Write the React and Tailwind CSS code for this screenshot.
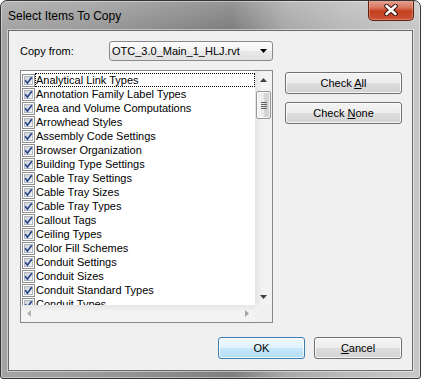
import clsx from "clsx";

const ITEMS = [
  "Analytical Link Types",
  "Annotation Family Label Types",
  "Area and Volume Computations",
  "Arrowhead Styles",
  "Assembly Code Settings",
  "Browser Organization",
  "Building Type Settings",
  "Cable Tray Settings",
  "Cable Tray Sizes",
  "Cable Tray Types",
  "Callout Tags",
  "Ceiling Types",
  "Color Fill Schemes",
  "Conduit Settings",
  "Conduit Sizes",
  "Conduit Standard Types",
  "Conduit Types",
];

function Check() {
  return (
    <svg width="13" height="13" viewBox="0 0 13 13" className="shrink-0">
      <defs>
        <linearGradient id="cbx" x1="0" y1="0" x2="1" y2="1">
          <stop offset="0" stopColor="#c9cdd4" />
          <stop offset="1" stopColor="#f6f6f6" />
        </linearGradient>
      </defs>
      <rect x="0.5" y="0.5" width="12" height="12" fill="#fff" stroke="#8e8f8f" />
      <rect x="2.5" y="2.5" width="8" height="8" fill="url(#cbx)" stroke="#b3b8c0" />
      <path d="M3.2 6.3 L5.4 9.2 L9.8 3.2" fill="none" stroke="#28468c" strokeWidth="1.7" />
    </svg>
  );
}

function Arrow({ dir, color = "#3f3f3f" }) {
  const d = {
    up: "M3.5 0 L7 4 L0 4 Z",
    down: "M0 0 L7 0 L3.5 4 Z",
    left: "M4 0 L4 7 L0 3.5 Z",
    right: "M0 0 L4 3.5 L0 7 Z",
  }[dir];
  const vert = dir === "up" || dir === "down";
  return (
    <svg width={vert ? 7 : 4} height={vert ? 4 : 7}>
      <path d={d} fill={color} />
    </svg>
  );
}

function WinButton({ children, def, className }) {
  return (
    <button
      type="button"
      className={clsx(
        "h-[22px] rounded-[3px] border flex items-center justify-center text-[11px] text-black",
        def
          ? "border-[#3c7fb1] bg-[linear-gradient(180deg,#eef8fd_0%,#dff2fc_50%,#c6e8fb_51%,#b3def6_100%)] shadow-[inset_0_0_0_1px_rgba(255,255,255,0.75)]"
          : "border-[#707070] bg-[linear-gradient(180deg,#f4f4f4_0%,#ececec_50%,#dedede_51%,#d2d2d2_100%)] shadow-[inset_0_0_0_1px_rgba(255,255,255,0.8)]",
        className
      )}
    >
      <span className="whitespace-pre">{children}</span>
    </button>
  );
}

function CloseButton() {
  return (
    <div className="absolute left-[367px] top-[-1px] w-[46px] h-[21px] rounded-b-[5px] border border-[#5e2215] border-t-0 bg-[linear-gradient(180deg,#e7a899_0%,#d9725a_40%,#c2401f_55%,#cd5234_100%)] shadow-[inset_0_0_0_1px_rgba(255,200,180,0.35)] flex items-center justify-center">
      <svg width="14" height="12" viewBox="0 0 14 12">
        <path d="M2.5 2 L11.5 10 M11.5 2 L2.5 10" stroke="#3b130b" strokeWidth="4.6" strokeLinecap="round" />
        <path d="M2.5 2 L11.5 10 M11.5 2 L2.5 10" stroke="#ffffff" strokeWidth="2.6" strokeLinecap="round" />
      </svg>
    </div>
  );
}

export default function App() {
  return (
    <div
      className="w-[421px] h-[379px] relative flex flex-col overflow-hidden rounded-t-[7px] rounded-b-[3px] border border-[#353535] bg-[linear-gradient(180deg,rgba(255,255,255,0.18)_0px,rgba(255,255,255,0)_28px),linear-gradient(90deg,#a4a4a4_0%,#9c9c9c_20%,#8d8d8d_38%,#7f7f7f_55%,#a9a9a9_68%,#bababa_82%,#c8c8c8_100%)] shadow-[inset_0_0_0_1px_rgba(255,255,255,0.4)]"
      style={{ fontFamily: '"Liberation Sans", Arial, sans-serif' }}
    >
      {/* title bar */}
      <div className="h-[29px] shrink-0 flex items-start pl-[7px] pt-[7px]">
        <span className="text-[12px] leading-[16px] text-black">Select Items To Copy</span>
      </div>
      <CloseButton />

      {/* client area */}
      <div className="flex-1 mx-[7px] mb-[7px] border border-[#6b6b6b] bg-[#f0f0f0] shadow-[0_0_0_1px_rgba(255,255,255,0.45)] flex flex-col pl-[11px] pt-[10px] text-[11px] text-black">
        <div className="flex items-center h-[20px]">
          <span className="w-[89px]">Copy from:</span>
          <div className="w-[164px] h-[20px] rounded-[3px] border border-[#8a8a8a] bg-[linear-gradient(180deg,#fbfbfb_0%,#f3f3f3_50%,#e9e9e9_51%,#e2e2e2_100%)] flex items-center pl-[2px] pr-[5px]">
            <span className="flex-1">OTC_3.0_Main_1_HLJ.rvt</span>
            <Arrow dir="down" color="#000" />
          </div>
        </div>

        <div className="flex mt-[9px]">
          {/* listbox */}
          <div className="w-[253px] h-[253px] border border-[#828790] bg-white flex flex-col">
            <div className="flex h-[234px]">
              <div className="flex-1 overflow-hidden pt-[2px]">
                {ITEMS.map((it, i) => (
                  <div key={it} className="flex items-center h-[14px] pl-[1px]">
                    <Check />
                    <span
                      className={clsx(
                        "flex-1 h-[14px] pl-[1px] leading-[14px] whitespace-nowrap",
                        i === 0 && "[outline:1px_dotted_#000] [outline-offset:-1px]"
                      )}
                    >
                      {it}
                    </span>
                  </div>
                ))}
              </div>
              {/* vertical scrollbar */}
              <div className="w-[17px] flex flex-col bg-[linear-gradient(90deg,#e4e4e4_0%,#f2f2f2_40%,#f2f2f2_100%)]">
                <div className="h-[17px] flex items-center justify-center">
                  <Arrow dir="up" />
                </div>
                <div className="flex-1 pt-[3px]">
                  <div className="mx-[1px] h-[28px] rounded-[2px] border border-[#979797] bg-[linear-gradient(90deg,#f4f4f4_0%,#eaeaea_50%,#d9d9d9_51%,#d0d0d0_100%)] shadow-[inset_0_0_0_1px_rgba(255,255,255,0.7)] flex flex-col items-center justify-center gap-[1px]">
                    <div className="w-[6px] h-[1px] bg-[#5f5f5f]" />
                    <div className="w-[6px] h-[1px] bg-[#5f5f5f]" />
                    <div className="w-[6px] h-[1px] bg-[#5f5f5f]" />
                    <div className="w-[6px] h-[1px] bg-[#5f5f5f]" />
                  </div>
                </div>
                <div className="h-[17px] flex items-center justify-center">
                  <Arrow dir="down" />
                </div>
              </div>
            </div>
            {/* horizontal scrollbar */}
            <div className="h-[17px] flex">
              <div className="flex-1 flex items-center justify-between px-[6px] bg-[linear-gradient(180deg,#e6e6e6_0%,#f3f3f3_40%,#f3f3f3_100%)]">
                <Arrow dir="left" color="#b4b4b4" />
                <Arrow dir="right" color="#a4a4a4" />
              </div>
              <div className="w-[17px] bg-[#f0f0f0]" />
            </div>
          </div>

          {/* side buttons */}
          <div className="ml-[12px] mt-[2px] w-[117px] flex flex-col gap-[8px]">
            <WinButton>
              Check <u className="underline-offset-[1px]">A</u>ll
            </WinButton>
            <WinButton>
              Check <u className="underline-offset-[1px]">N</u>one
            </WinButton>
          </div>
        </div>

        <div className="flex justify-end mt-[14px] pr-[10px] gap-[9px]">
          <WinButton def className="w-[87px]">
            OK
          </WinButton>
          <WinButton className="w-[88px]">
            <u className="underline-offset-[1px]">C</u>ancel
          </WinButton>
        </div>
      </div>
    </div>
  );
}
